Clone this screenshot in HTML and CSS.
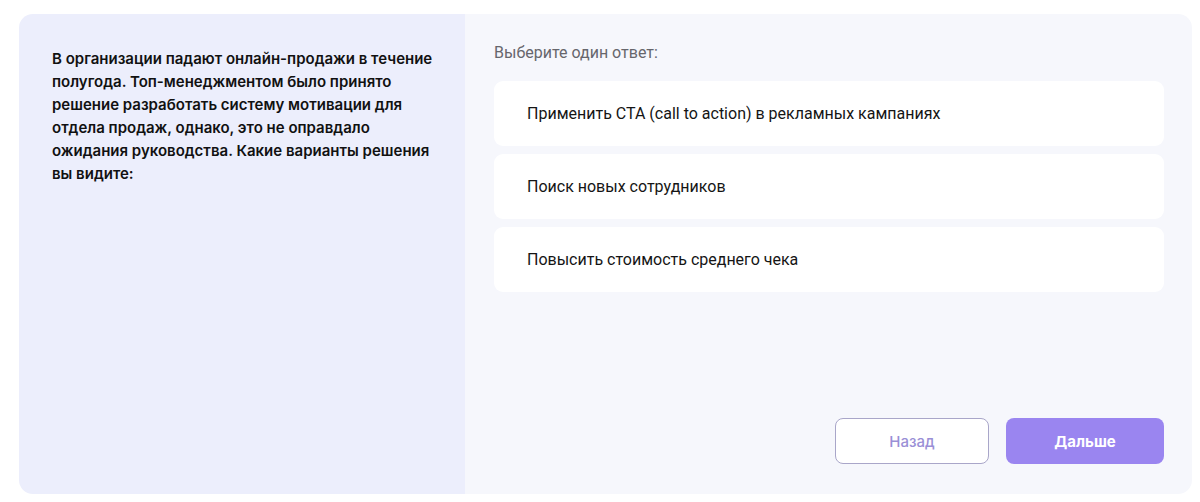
FILE: index.html
```html
<!DOCTYPE html>
<html lang="ru">
<head>
<meta charset="utf-8">
<link rel="stylesheet" href="styles.css">
</head>
<body>
<div class="card">
  <div class="question">
    <p>В организации падают онлайн-продажи в течение полугода. Топ-менеджментом было принято решение разработать систему мотивации для отдела продаж, однако, это не оправдало ожидания руководства. Какие варианты решения вы видите:</p>
  </div>
  <div class="answers">
    <div class="label">Выберите один ответ:</div>
    <div class="options">
      <div class="option">Применить СТА (call to action) в рекламных кампаниях</div>
      <div class="option">Поиск новых сотрудников</div>
      <div class="option">Повысить стоимость среднего чека</div>
    </div>
    <div class="actions">
      <button class="btn back">Назад</button>
      <button class="btn next">Дальше</button>
    </div>
  </div>
</div>
</body>
</html>
```
FILE: styles.css
```css
html, body { margin: 0; padding: 0; background: #fff; }
body { padding: 14px 8px 8px 19px; }
.card {
  width: 1173px;
  height: 480px;
  display: flex;
  border-radius: 14px;
  overflow: hidden;
}
.question {
  width: 446px;
  background: #eceefc;
  padding: 33px 28px 0 33px;
  box-sizing: border-box;
}
.question p {
  margin: 0;
  font-family: Inter, "Noto Sans", sans-serif;
  font-weight: 600;
  font-size: 15px;
  line-height: 23px;
  color: #111;
}
.answers {
  flex: 1;
  background: #f6f7fc;
  padding: 29px 28px 30px 29px;
  display: flex;
  flex-direction: column;
}
.label {
  font-family: Roboto, "Noto Sans", sans-serif;
  font-size: 16px;
  color: #66666c;
  line-height: 20px;
  margin-bottom: 18px;
}
.options { display: flex; flex-direction: column; gap: 8px; }
.option {
  background: #fff;
  border-radius: 9px;
  height: 65px;
  display: flex;
  align-items: center;
  padding-left: 33px;
  font-family: Roboto, "Noto Sans", sans-serif;
  font-size: 16px;
  color: #151515;
}
.actions {
  margin-top: auto;
  display: flex;
  justify-content: flex-end;
  gap: 17px;
}
.btn {
  height: 46px;
  border-radius: 8px;
  font-family: Inter, "Noto Sans", sans-serif;
  font-size: 15px;
  cursor: pointer;
}
.back {
  width: 154px;
  background: #fff;
  border: 1px solid #a9a6c9;
  color: #9a8fd6;
  font-weight: 500;
}
.next {
  width: 158px;
  background: #9a85f0;
  border: none;
  color: #fff;
  font-weight: 700;
}
```
